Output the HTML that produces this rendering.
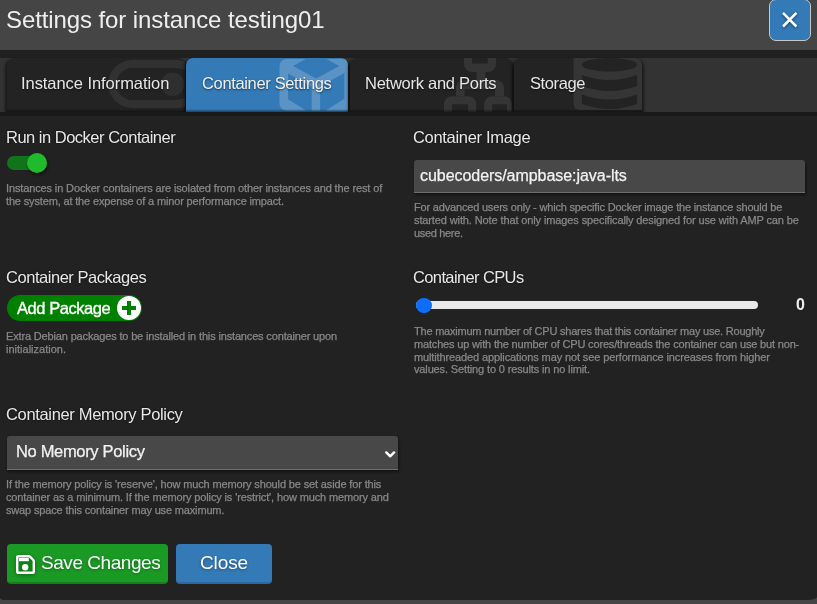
<!DOCTYPE html>
<html><head><meta charset="utf-8">
<style>
*{box-sizing:border-box;margin:0;padding:0}
html,body{width:817px;height:604px;overflow:hidden;background:#454545;font-family:"Liberation Sans",sans-serif}
.abs{position:absolute;white-space:nowrap;will-change:transform}
.lbl,.input span,.btn span{will-change:transform}
#hdr{position:absolute;left:0;top:0;width:817px;height:50px;background:#454545}
#title{left:6px;top:6px;font-size:24px;line-height:28px;color:#eee;letter-spacing:-0.1px}
#xbtn{position:absolute;left:769px;top:-1px;width:42px;height:42px;background:#337ab7;border:1px solid #c8c8c8;border-radius:7px}
#band1{position:absolute;left:0;top:50px;width:817px;height:8px;background:#202020}
#tabrow{position:absolute;left:0;top:58px;width:817px;height:54px;background:#333}
.tab{position:absolute;top:0;height:54px;background:#232323;border-radius:7px 7px 0 0;overflow:hidden;box-shadow:-2px 2px 3px rgba(0,0,0,.5),2px 2px 3px rgba(0,0,0,.5)}
.tab .lbl{position:absolute;top:-2px;line-height:54px;font-size:16.5px;color:#e6e6e6;white-space:nowrap;text-shadow:0 1px 2px rgba(0,0,0,.6)}
.tab svg{position:absolute;left:0;top:0}
.tab .tb{position:absolute;left:0;right:0;bottom:0;height:3px;background:linear-gradient(rgba(0,0,0,0),rgba(0,0,0,.45))}
#band2{position:absolute;left:0;top:112px;width:817px;height:4px;background:#191919}
#content{position:absolute;left:0;top:116px;width:817px;height:484px;background:#222;border-radius:0 0 10px 4px / 0 0 3px 3px}
.label{font-size:16.5px;color:#e8e8e8;line-height:18px;text-shadow:0 0 2px rgba(0,0,0,.8)}
.desc{font-size:11px;color:#888;line-height:12.8px;-webkit-text-stroke:0.25px #888;letter-spacing:-0.12px;white-space:nowrap}
.input{position:absolute;background:#484848;border-bottom:1px solid #6e6e6e;border-radius:3px 3px 0 0;box-shadow:1px 2px 3px rgba(0,0,0,.45)}
.input span{position:absolute;white-space:nowrap;color:#f2f2f2;font-size:16px;-webkit-text-stroke:0.25px #f2f2f2}
.btn{position:absolute;border-radius:4px;color:#fff;font-size:19px;white-space:nowrap;text-shadow:0 1px 3px rgba(0,0,0,.35)}
</style></head><body>
<div id="hdr"></div>
<div class="abs" id="title">Settings for instance testing01</div>
<div id="xbtn"><svg width="42" height="42" style="position:absolute;left:-1px;top:-1px" viewBox="0 0 42 42"><path d="M14 13.9L27.4 27.5M27.4 13.9L14 27.5" stroke="#fff" stroke-width="2.5" fill="none" style="filter:drop-shadow(0 1px 1.5px rgba(0,0,0,.45))"/></svg></div>
<div id="band1"></div>
<div id="tabrow">
  <div class="tab" style="left:7px;width:178px">
    <svg width="178" height="54"><rect x="105.3" y="6" width="84" height="40" rx="20" fill="none" stroke="#313131" stroke-width="8"/><circle cx="165.7" cy="26.2" r="11.6" fill="#2f2f2f"/></svg><div class="tb"></div>
    <div class="lbl" style="left:14.2px;letter-spacing:-0.06px">Instance Information</div></div>
  <div class="tab" style="left:186px;width:162px;background:#337ab7">
    <svg width="162" height="54"><g fill="#5b93c4"><rect x="93.5" y="1" width="80" height="51.5" rx="7"/></g>
    <g fill="#337ab7"><path d="M107 8 L130 -4.6 L153.3 8 L130.2 20.6 Z"/><path d="M102 15.6 L125.7 28.6 L125.7 56 L102 41.2 Z"/><path d="M134.2 28.6 L158.3 15 L158.3 40.7 L134.2 56 Z"/></g></svg><div class="tb"></div>
    <div class="lbl" style="left:16px;color:#f0f0f0;letter-spacing:-0.35px">Container Settings</div></div>
  <div class="tab" style="left:350px;width:161.7px">
    <svg width="163" height="54"><g fill="#353535">
      <path d="M114 -2 H122 V5.5 H137.7 V-2 H146 V6 A8 8 0 0 1 138 14 H122 A8 8 0 0 1 114 6 Z"/>
      <rect x="126.7" y="12" width="8.5" height="12"/>
      <path d="M106 38.2 V30 A8 8 0 0 1 114 22 H146 A8 8 0 0 1 154 30 V38.2 H145 V31 H114.6 V38.2 Z"/>
      <path d="M94 56 V46.2 A8 8 0 0 1 102 38.2 H118.2 A8 8 0 0 1 126.2 46.2 V56 H118.1 V46.2 H102 V56 Z"/>
      <path d="M134.2 56 V46.2 A8 8 0 0 1 142.2 38.2 H153.8 A8 8 0 0 1 161.8 46.2 V56 H157 V46.2 H142.2 V56 Z"/>
    </g></svg><div class="tb"></div>
    <div class="lbl" style="left:15.2px;letter-spacing:-0.26px">Network and Ports</div></div>
  <div class="tab" style="left:514.3px;width:127.7px">
    <svg width="128" height="54"><rect x="59.5" y="-6" width="80" height="58" rx="6" fill="#353535"/>
    <g fill="#232323"><ellipse cx="95.5" cy="6.8" rx="27.6" ry="6.8"/><path d="M67.9 17 Q95.5 27 123.1 17 V28 Q95.5 38 67.9 28 Z"/><path d="M67.9 36.5 Q95.5 46.5 123.1 36.5 V46 Q95.5 56 67.9 46 Z"/></g></svg><div class="tb"></div>
    <div class="lbl" style="left:15.6px;letter-spacing:-0.4px">Storage</div></div>
</div>
<div id="band2"></div>
<div id="content"></div>

<div class="abs label" style="left:6.3px;top:128px;letter-spacing:-0.5px">Run in Docker Container</div>
<div class="abs label" style="left:412.8px;top:128px;letter-spacing:-0.31px">Container Image</div>
<div class="abs label" style="left:6px;top:268px;letter-spacing:-0.46px">Container Packages</div>
<div class="abs label" style="left:413px;top:268px;letter-spacing:-0.62px">Container CPUs</div>
<div class="abs label" style="left:6px;top:405px;letter-spacing:-0.34px">Container Memory Policy</div>

<!-- toggle -->
<div style="position:absolute;left:7px;top:156px;width:36px;height:14px;border-radius:7px;background:#10741a"></div>
<div style="position:absolute;left:27px;top:153px;width:20px;height:20px;border-radius:50%;background:#1fbb2b;box-shadow:1px 2px 3px rgba(0,0,0,.55)"></div>

<!-- container image input -->
<div class="input" style="left:414px;top:160px;width:391px;height:33px"><span style="left:5.6px;top:7px;letter-spacing:-0.05px">cubecoders/ampbase:java-lts</span></div>

<!-- add package -->
<div style="position:absolute;left:7px;top:295px;width:135px;height:26px;border-radius:13px;background:#008000"></div>
<div class="abs" style="left:16.8px;top:298px;font-size:16.5px;color:#fff;line-height:20px;letter-spacing:-0.44px;-webkit-text-stroke:0.35px #fff">Add Package</div>
<div style="position:absolute;left:117px;top:296px;width:24px;height:24px;border-radius:50%;background:#fff"></div>
<div style="position:absolute;left:122px;top:306px;width:14px;height:4px;background:#008000"></div>
<div style="position:absolute;left:127px;top:301px;width:4px;height:14px;background:#008000"></div>

<!-- cpu slider -->
<div style="position:absolute;left:416px;top:301px;width:342px;height:8px;border-radius:4px;background:#e9e9e9"></div>
<div style="position:absolute;left:416px;top:297.5px;width:15.5px;height:15.5px;border-radius:50%;background:#0d6efd"></div>
<div class="abs" style="left:795.5px;top:296px;font-size:16px;font-weight:bold;color:#eee;line-height:18px">0</div>

<!-- memory select -->
<div class="input" style="left:7px;top:436px;width:391px;height:34px"><span style="left:9.2px;top:6px;font-size:16.5px;letter-spacing:-0.33px">No Memory Policy</span>
<svg width="12" height="8" style="position:absolute;left:378px;top:14.5px" viewBox="0 0 12 8"><path d="M1.3 1.4 L5.2 5.3 L9.1 1.4" stroke="#fff" stroke-width="2.4" fill="none" stroke-linecap="round" stroke-linejoin="round"/></svg></div>

<div class="abs desc" style="left:6px;top:182px"><span style="letter-spacing: -0.129px;">Instances in Docker containers are isolated from other instances and the rest of</span><br><span style="letter-spacing: -0.155px;">the system, at the expense of a minor performance impact.</span></div>
<div class="abs desc" style="left:413.5px;top:200.6px"><span style="letter-spacing: -0.183px;">For advanced users only - which specific Docker image the instance should be</span><br><span style="letter-spacing: -0.116px;">started with. Note that only images specifically designed for use with AMP can be</span><br><span style="letter-spacing: -0.333px;">used here.</span></div>
<div class="abs desc" style="left:6px;top:330px"><span style="letter-spacing: -0.155px;">Extra Debian packages to be installed in this instances container upon</span><br><span style="letter-spacing: 0.001px;">initialization.</span></div>
<div class="abs desc" style="left:413.5px;top:324.6px"><span style="letter-spacing: -0.217px;">The maximum number of CPU shares that this container may use. Roughly</span><br><span style="letter-spacing: -0.166px;">matches up with the number of CPU cores/threads the container can use but non-</span><br><span style="letter-spacing: -0.12px;">multithreaded applications may not see performance increases from higher</span><br><span style="letter-spacing: -0.14px;">values. Setting to 0 results in no limit.</span></div>
<div class="abs desc" style="left:6px;top:478px"><span style="letter-spacing: -0.14px;">If the memory policy is 'reserve', how much memory should be set aside for this</span><br><span style="letter-spacing: -0.129px;">container as a minimum. If the memory policy is 'restrict', how much memory and</span><br><span style="letter-spacing: -0.16px;">swap space this container may use maximum.</span></div>

<!-- buttons -->
<div class="btn" style="left:7px;top:544px;width:161px;height:40px;background:#1a9a24;border-bottom:2px solid #148019">
  <svg width="19" height="19" viewBox="0 0 19 19" style="position:absolute;left:9px;top:11px;overflow:visible;filter:drop-shadow(0 1px 2px rgba(0,0,0,.35))"><path d="M2.2 1.2 H13 Q13.5 1.2 14 1.7 L17.3 5 Q17.8 5.5 17.8 6 V16.8 A1 1 0 0 1 16.8 17.8 H2.2 A1 1 0 0 1 1.2 16.8 V2.2 A1 1 0 0 1 2.2 1.2 Z" fill="#0f7f17" stroke="#fff" stroke-width="2.4"/><rect x="3" y="3" width="9.8" height="3.2" fill="#fff"/><circle cx="9.2" cy="12.3" r="3.2" fill="#fff"/></svg>
  <span style="position:absolute;left:34px;top:8px;line-height:22px;letter-spacing:-0.45px">Save Changes</span></div>
<div class="btn" style="left:176px;top:544px;width:96px;height:40px;background:#337ab7;border-bottom:2px solid #2a689e">
  <span style="position:absolute;left:24px;top:8px;line-height:22px;letter-spacing:-0.1px">Close</span></div>

</body></html>
